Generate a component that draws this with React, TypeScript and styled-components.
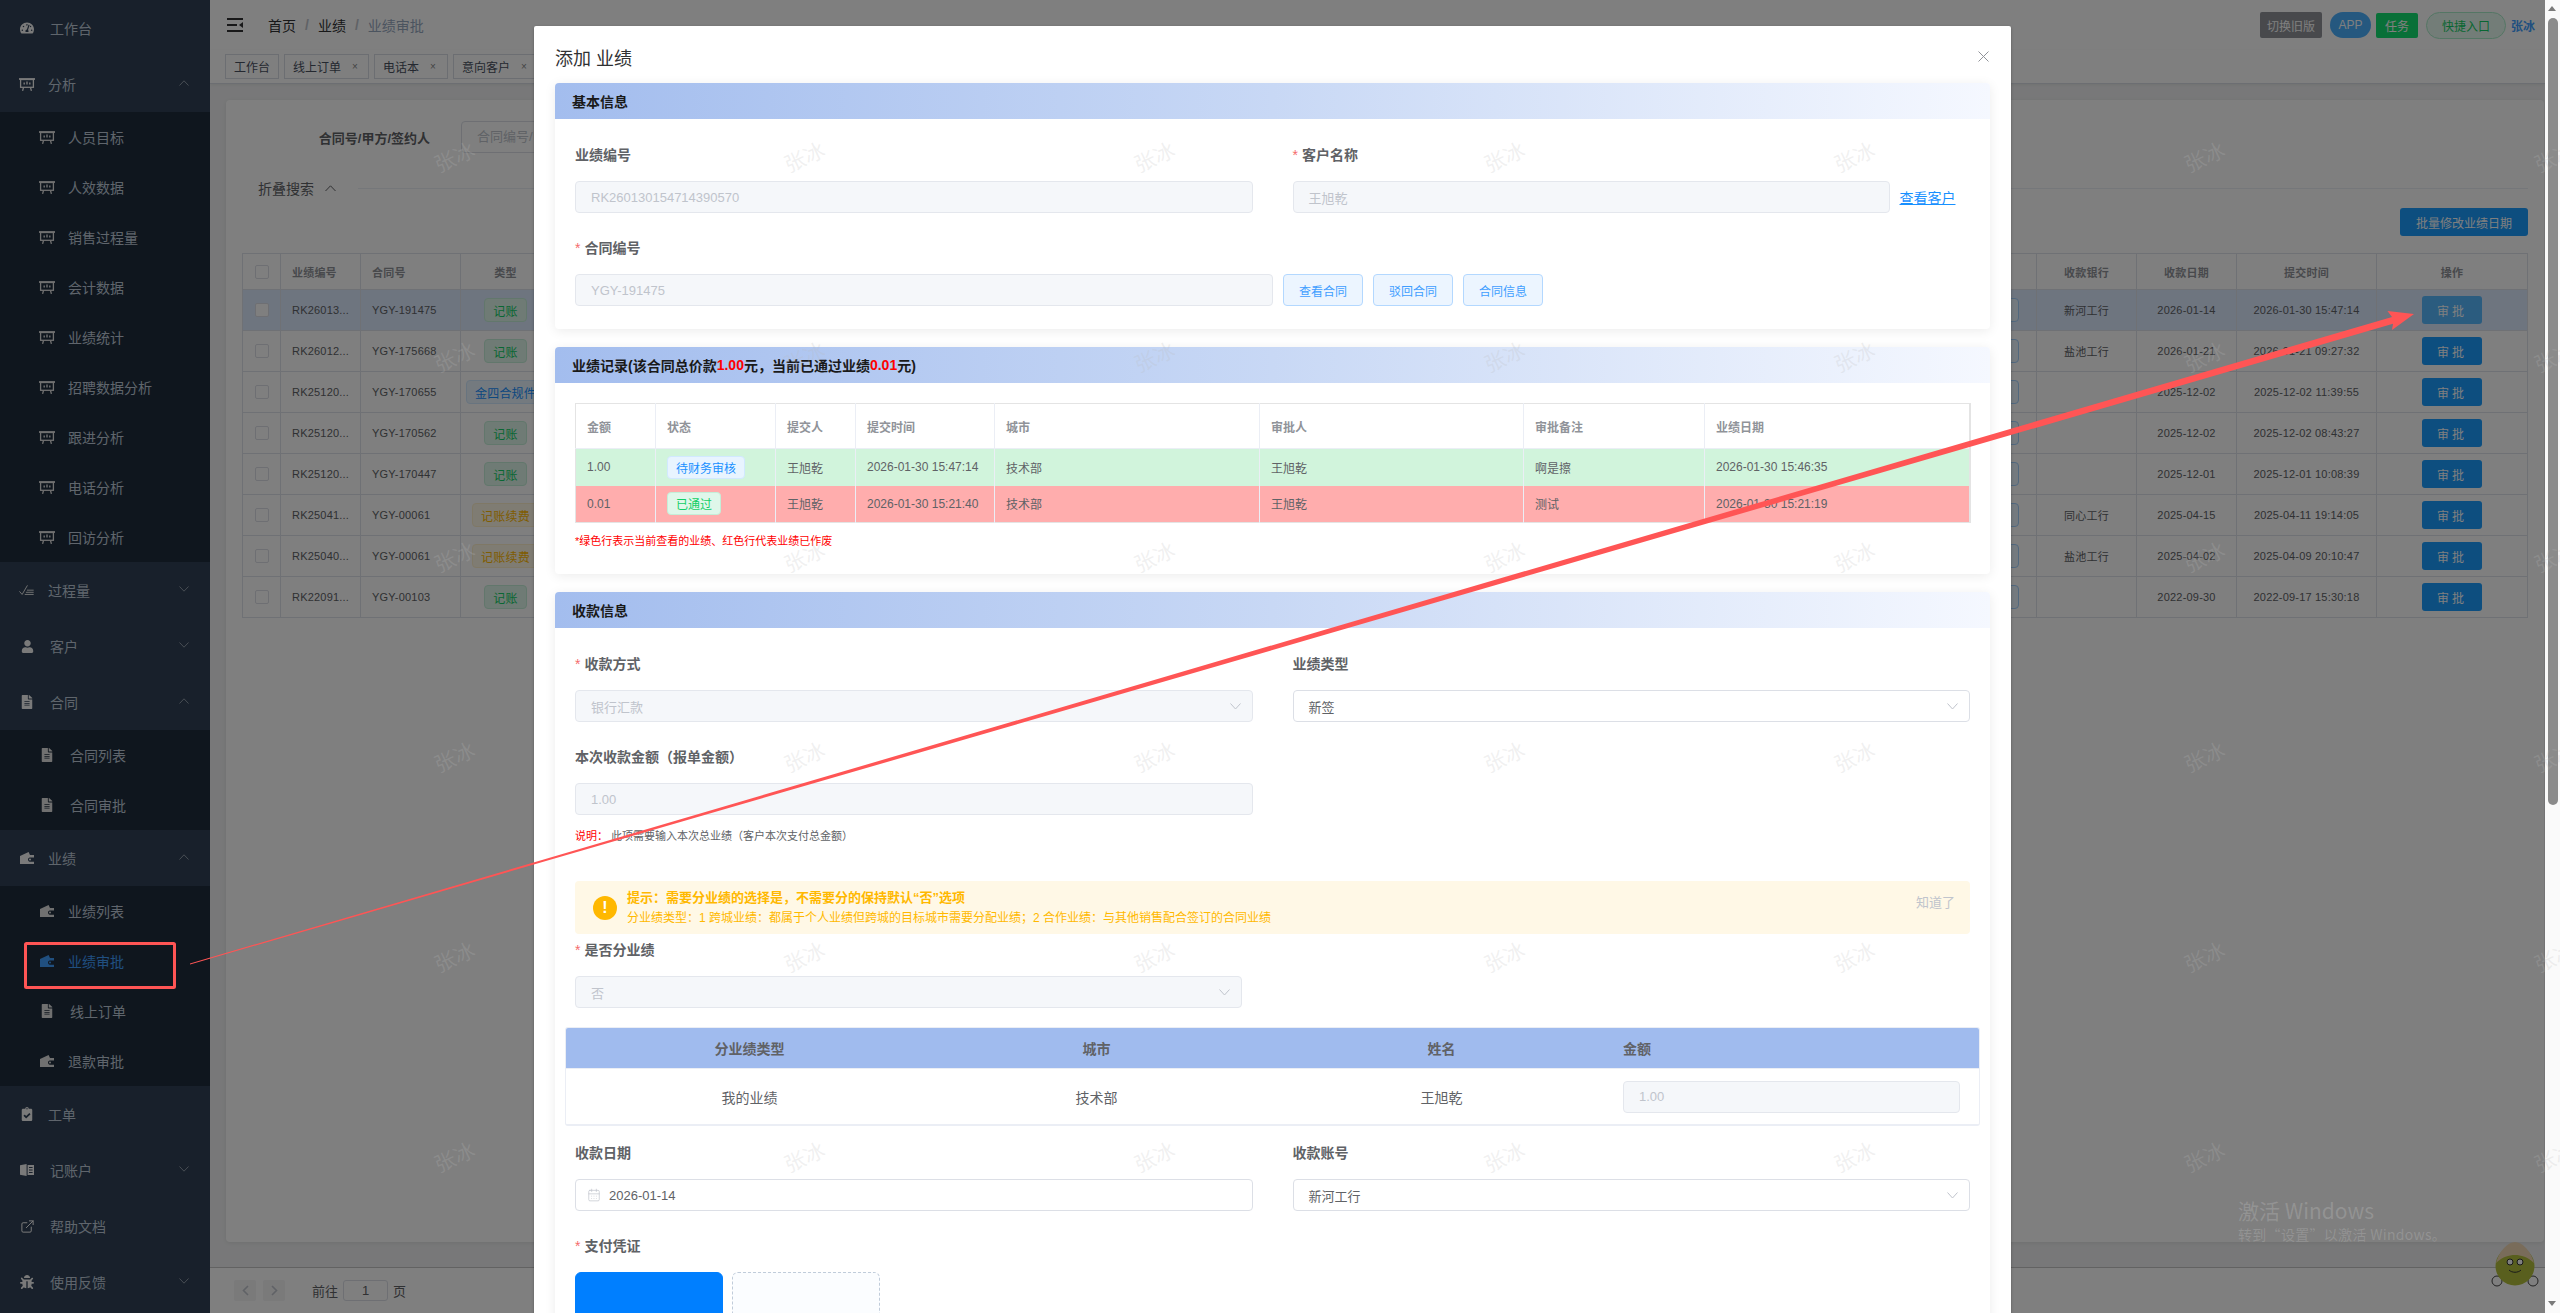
import React from "react";
import styled, { createGlobalStyle, css } from "styled-components";
import { FaTachometerAlt, FaUser, FaFileAlt, FaClipboardCheck, FaBug } from "react-icons/fa";
import { ExternalLink, CalendarDays } from "lucide-react";

const Global = createGlobalStyle`
  html, body { margin: 0; height: 100%; overflow: hidden; }
  #root { height: 1313px; overflow: hidden; }
  body { font-family: "Liberation Sans", "Noto Sans CJK SC", sans-serif; font-size: 14px; color: #606266; background: #fff; }
  * { box-sizing: border-box; }
`;

/* ---------- page shell ---------- */
const Shell = styled.div`
  display: flex;
  width: 2560px;
  height: 1313px;
  padding-right: 15px;
  position: relative;
  overflow: hidden;
`;
const Sidebar = styled.aside`
  flex: 0 0 210px;
  background: #304156;
  display: flex;
  flex-direction: column;
`;
const MenuRow = styled.div<{ $sub?: boolean; $active?: boolean }>`
  display: flex;
  align-items: center;
  flex: none;
  height: ${(p) => (p.$sub ? 50 : 56)}px;
  padding-left: ${(p) => (p.$sub ? 39 : 19)}px;
  background: ${(p) => (p.$sub ? "#1f2d3d" : "#304156")};
  color: ${(p) => (p.$active ? "#409eff" : "#bfcbd9")};
  position: relative;
`;
const MenuIcon = styled.span<{ $sub?: boolean; $active?: boolean }>`
  width: 16px;
  height: 16px;
  display: flex;
  align-items: center;
  justify-content: center;
  flex: none;
  color: ${(p) => (p.$active ? "#409eff" : p.$sub ? "#e0e0e0" : "#f4f4f4")};
`;
const MenuText = styled.span<{ $wide?: boolean }>`
  margin-left: ${(p) => (p.$wide ? 15 : 13)}px;
  white-space: nowrap;
`;
const MenuChevron = styled.svg`
  margin-left: auto;
  margin-right: 21px;
  width: 10px;
  height: 6px;
  margin-top: -3px;
  color: #909ba8;
`;

const Main = styled.main`
  flex: 1;
  min-width: 0;
  display: flex;
  flex-direction: column;
  background: #f0f1f2;
`;
const Navbar = styled.header`
  flex: 0 0 50px;
  display: flex;
  align-items: center;
  background: #fff;
  padding: 0 10px 0 17px;
  box-shadow: 0 1px 4px rgba(0, 21, 41, 0.08);
`;
const Crumbs = styled.nav`
  margin-left: 25px;
  display: flex;
  align-items: center;
`;
const Crumb = styled.span<{ $last?: boolean }>`
  color: ${(p) => (p.$last ? "#97a8be" : "#303133")};
`;
const CrumbSep = styled.span`
  color: #c0c4cc;
  margin: 0 9px;
  font-weight: 700;
`;
const NavTools = styled.div`
  margin-left: auto;
  display: flex;
  align-items: center;
`;
const NavBtn = styled.span<{ $w: number; $bg: string; $ml: number; $round?: boolean; $color?: string; $border?: string; $h?: number }>`
  display: flex;
  align-items: center;
  justify-content: center;
  width: ${(p) => p.$w}px;
  height: ${(p) => p.$h ?? 26}px;
  margin-left: ${(p) => p.$ml}px;
  background: ${(p) => p.$bg};
  color: ${(p) => p.$color ?? "#fff"};
  border-radius: ${(p) => (p.$round ? "14px" : "2px")};
  font-size: 12px;
  ${(p) => p.$border && css`border: 1px solid ${p.$border};`}
`;
const NavUser = styled.span`
  margin-left: 5px;
  color: #409eff;
  font-size: 12px;
  font-weight: 700;
  width: 24px;
`;
const TagBar = styled.div`
  flex: 0 0 34px;
  display: flex;
  align-items: flex-start;
  gap: 5px;
  padding: 4px 0 0 15px;
  background: #fff;
  border-bottom: 1px solid #d8dce5;
  box-shadow: 0 1px 3px rgba(0, 0, 0, 0.06);
`;
const ViewTag = styled.span<{ $w: number }>`
  display: flex;
  align-items: center;
  height: 25px;
  width: ${(p) => p.$w}px;
  padding-left: 8px;
  font-size: 12px;
  color: #495060;
  background: #fff;
  border: 1px solid #d8dce5;
  gap: 8px;
`;
const TagClose = styled.span`
  font-size: 10px;
  color: #888;
  margin-left: 3px;
`;
const Content = styled.div`
  flex: 1;
  min-height: 0;
  padding: 16px 1px 25px 16px;
  display: flex;
`;
const PanelCard = styled.section`
  flex: 1;
  background: #fff;
  border-radius: 4px;
  padding: 21px 16px 0;
  box-shadow: 0 1px 4px rgba(0, 0, 0, 0.08);
  min-width: 0;
`;
const FilterRow = styled.div`
  display: flex;
  align-items: center;
`;
const FilterLabel = styled.label`
  width: 188px;
  text-align: right;
  font-size: 13px;
  font-weight: 700;
  color: #606266;
`;
const FilterInput = styled.div`
  margin-left: 31px;
  width: 220px;
  height: 32px;
  border: 1px solid #dcdfe6;
  border-radius: 4px;
  padding-left: 15px;
  font-size: 13px;
  line-height: 30px;
  color: #c0c4cc;
`;
const Collapse = styled.div`
  display: flex;
  align-items: center;
  margin-top: 25px;
  height: 20px;
  padding-left: 16px;
  color: #606266;
`;
const CollapseChevron = styled.svg`
  margin-left: 11px;
  width: 11px;
  height: 7px;
  color: #606266;
`;
const CollapseLine = styled.span`
  flex: 1;
  margin-left: 22px;
  border-top: 1px solid #ebeef5;
`;
const Actions = styled.div`
  display: flex;
  justify-content: flex-end;
  margin: 10px 0 17px;
`;
const PrimaryBtn = styled.span`
  display: flex;
  align-items: center;
  justify-content: center;
  height: 28px;
  padding: 0 16px;
  background: #1a9cff;
  color: #fff;
  border-radius: 3px;
  font-size: 12px;
`;
const BgTable = styled.div`
  border-top: 1px solid #dfe3ea;
  border-left: 1px solid #dfe3ea;
  font-size: 11px;
  color: #606266;
`;
const BgRow = styled.div<{ $head?: boolean; $selected?: boolean }>`
  display: grid;
  grid-template-columns: 38px 80px 100px 90px 1fr 100px 100px 100px 140px 151px;
  height: ${(p) => (p.$head ? 36 : 41)}px;
  font-weight: ${(p) => (p.$head ? 700 : 400)};
  color: ${(p) => (p.$head ? "#909399" : "#606266")};
  background: ${(p) => (p.$selected ? "#dceaff" : "#fff")};
`;
const BgCell = styled.div<{ $center?: boolean; $voucher?: boolean }>`
  display: flex;
  align-items: center;
  justify-content: ${(p) => (p.$voucher ? "flex-end" : p.$center ? "center" : "flex-start")};
  padding: ${(p) => (p.$voucher ? "0 17px 0 0" : p.$center ? "0" : "0 11px")};
  border-right: 1px solid #dfe3ea;
  border-bottom: 1px solid #dfe3ea;
  white-space: nowrap;
  overflow: hidden;
  letter-spacing: 0.2px;
`;
const CheckBox = styled.span`
  width: 14px;
  height: 14px;
  border: 1px solid #dcdfe6;
  border-radius: 2px;
  background: #fff;
`;
const toneMap = {
  green: { bg: "#dff7ea", bd: "#c4efd8", fg: "#13ce66" },
  blue: { bg: "#e8f4ff", bd: "#d1e9ff", fg: "#1890ff" },
  orange: { bg: "#fff8e6", bd: "#fff1cc", fg: "#ffba00" },
};
const StatusTag = styled.span<{ $tone: keyof typeof toneMap; $h?: number }>`
  display: inline-flex;
  align-items: center;
  height: ${(p) => p.$h ?? 24}px;
  padding: 0 8px;
  font-size: 12px;
  border-radius: 4px;
  background: ${(p) => toneMap[p.$tone].bg};
  border: 1px solid ${(p) => toneMap[p.$tone].bd};
  color: ${(p) => toneMap[p.$tone].fg};
`;
const MiniBtn = styled.span`
  width: 60px;
  height: 24px;
  background: #e8f4ff;
  border: 1px solid #a3d0fd;
  border-radius: 4px;
`;
const ApproveBtn = styled.span<{ $hover?: boolean }>`
  display: flex;
  align-items: center;
  justify-content: center;
  width: 60px;
  height: 28px;
  background: ${(p) => (p.$hover ? "#56b8ff" : "#1a9cff")};
  color: #fff;
  border-radius: 3px;
  font-size: 12px;
  letter-spacing: 3px;
`;
const Pager = styled.footer`
  flex: 0 0 46px;
  display: flex;
  align-items: center;
  background: #fff;
  border-top: 1px solid #c4c4c4;
  padding-left: 24px;
  font-size: 13px;
  color: #606266;
`;
const PageBtn = styled.span`
  width: 22px;
  height: 21px;
  margin-right: 7px;
  border-radius: 2px;
  background: #f4f4f5;
  color: #c0c4cc;
  display: flex;
  align-items: center;
  justify-content: center;
`;
const PageInput = styled.span`
  width: 45px;
  height: 21px;
  margin: 0 5px 0 5px;
  border: 1px solid #dcdfe6;
  border-radius: 3px;
  text-align: center;
  line-height: 19px;
  background: #fff;
`;
const PageJump = styled.span`
  margin-left: 20px;
  display: flex;
  align-items: center;
`;
const Mascot = styled.svg`
  position: absolute;
  left: 2490px;
  top: 1242px;
  width: 50px;
  height: 45px;
`;

/* ---------- overlays ---------- */
const Mask = styled.div`
  position: absolute;
  inset: 0;
  background: rgba(0, 0, 0, 0.5);
`;
const ModalLayer = styled.div`
  position: absolute;
  inset: 0 15px 0 0;
  display: flex;
  justify-content: center;
  align-items: flex-start;
  padding-top: 26px;
  overflow: hidden;
`;
const Dialog = styled.div`
  width: 1477px;
  flex: none;
  background: #fff;
  border-radius: 2px;
  padding: 21px 21px 0;
  box-shadow: 0 1px 3px rgba(0, 0, 0, 0.3);
  position: relative;
`;
const DialogTitle = styled.h2`
  margin: 0 0 12px;
  font-size: 18px;
  line-height: 24px;
  font-weight: 400;
  color: #303133;
`;
const DialogClose = styled.svg`
  position: absolute;
  top: 25px;
  right: 22px;
  width: 11px;
  height: 11px;
  color: #909399;
`;
const Card = styled.section`
  background: #fff;
  border-radius: 4px;
  box-shadow: 0 2px 12px rgba(0, 0, 0, 0.08);
  margin-bottom: 18px;
  overflow: hidden;
`;
const CardHead = styled.div`
  height: 36px;
  padding-left: 17px;
  display: flex;
  align-items: center;
  font-weight: 700;
  font-size: 14px;
  color: #1a1a1a;
  background: linear-gradient(90deg, #a3bdee 0%, #c8d8f5 50%, #f5f8ff 100%);
`;
const RedNum = styled.span`
  color: #f00;
`;
const CardBody = styled.div<{ $pt?: number; $pb: number }>`
  padding: ${(p) => p.$pt ?? 26}px 20px ${(p) => p.$pb}px;
`;
const TwoCol = styled.div`
  display: grid;
  grid-template-columns: 1fr 1fr;
  column-gap: 40px;
`;
const Field = styled.div<{ $top?: number }>`
  margin-top: ${(p) => p.$top ?? 0}px;
`;
const Label = styled.div`
  height: 20px;
  line-height: 20px;
  margin-bottom: 16px;
  font-weight: 700;
  color: #606266;
`;
const Star = styled.span`
  color: #f56c6c;
  font-weight: 400;
  margin-right: 4px;
`;
const Control = styled.div<{ $off?: boolean; $w?: number }>`
  height: 32px;
  width: ${(p) => (p.$w ? `${p.$w}px` : "100%")};
  flex: none;
  display: flex;
  align-items: center;
  padding: 0 11px 0 15px;
  font-size: 13px;
  border-radius: 4px;
  border: 1px solid ${(p) => (p.$off ? "#e4e7ed" : "#dcdfe6")};
  background: ${(p) => (p.$off ? "#f5f7fa" : "#fff")};
  color: ${(p) => (p.$off ? "#c0c4cc" : "#606266")};
`;
const Chevron = styled.svg`
  margin-left: auto;
  width: 11px;
  height: 7px;
  color: #c0c4cc;
`;
const InlineRow = styled.div<{ $gap: number }>`
  display: flex;
  align-items: center;
  gap: ${(p) => p.$gap}px;
`;
const Link = styled.a`
  color: #1890ff;
  text-decoration: underline;
`;
const PlainBtn = styled.span`
  width: 80px;
  height: 32px;
  display: flex;
  align-items: center;
  justify-content: center;
  font-size: 12px;
  background: #ecf5ff;
  border: 1px solid #b3d8ff;
  border-radius: 4px;
  color: #409eff;
`;
const RecordTable = styled.table`
  width: 1394px;
  table-layout: fixed;
  border-collapse: collapse;
  font-size: 12px;
  border: 1px solid #e4e4e4;
  border-right-width: 2px;
`;
const RecordRow = styled.tr<{ $bg: string }>`
  background: ${(p) => p.$bg};
  height: 37px;
`;
const RecordHeadRow = styled.tr`
  height: 45px;
`;
const RecordTh = styled.th`
  text-align: left;
  padding: 0 11px;
  font-weight: 700;
  color: #909399;
  border-right: 1px solid #ebeef5;
  border-bottom: 1px solid #ebeef5;
`;
const RecordTd = styled.td`
  padding: 0 11px;
  color: #606266;
  border-right: 1px solid #ebeef5;
`;
const Note = styled.div`
  margin-top: 9px;
  font-size: 11px;
  line-height: 18px;
  color: #f00;
`;
const Hint = styled.div`
  margin-top: 12px;
  font-size: 11px;
  line-height: 18px;
  color: #606266;
`;
const HintKey = styled.span`
  color: #f00;
  margin-right: 3px;
`;
const Alert = styled.div`
  position: relative;
  margin-top: 36px;
  height: 53px;
  display: flex;
  align-items: center;
  padding-left: 18px;
  gap: 10px;
  background: #fff8e6;
  border-radius: 4px;
`;
const AlertDot = styled.span`
  width: 24px;
  height: 24px;
  border-radius: 50%;
  background: #ffb800;
  color: #fff;
  font-size: 16px;
  font-weight: 700;
  display: flex;
  align-items: center;
  justify-content: center;
  flex: none;
`;
const AlertTitle = styled.div`
  font-size: 13px;
  font-weight: 700;
  line-height: 20px;
  color: #ffb800;
`;
const AlertDesc = styled.div`
  font-size: 12px;
  line-height: 20px;
  color: #ffb800;
`;
const AlertClose = styled.span`
  position: absolute;
  right: 15px;
  top: 11px;
  font-size: 13px;
  color: #c0c4cc;
`;
const SplitTable = styled.div`
  margin: 19px -10px 0;
  border: 1px solid #ebeef5;
  border-bottom-width: 2px;
  border-radius: 3px;
  overflow: hidden;
`;
const SplitRow = styled.div<{ $head?: boolean }>`
  display: grid;
  grid-template-columns: 367px 327px 363px 1fr;
  align-items: center;
  height: ${(p) => (p.$head ? 41 : 55)}px;
  background: ${(p) => (p.$head ? "#a0bbee" : "#fff")};
  font-weight: ${(p) => (p.$head ? 700 : 400)};
  color: #606266;
  border-bottom: ${(p) => (p.$head ? "1px solid #ebeef5" : "none")};
`;
const SplitCell = styled.div<{ $left?: boolean }>`
  text-align: ${(p) => (p.$left ? "left" : "center")};
  padding-right: ${(p) => (p.$left ? 19 : 0)}px;
`;
const DateIcon = styled.span`
  color: #c0c4cc;
  display: flex;
  margin: 0 8px 0 -4px;
`;
const Uploads = styled.div`
  display: flex;
  gap: 9px;
`;
const UploadBox = styled.div<{ $filled?: boolean }>`
  width: 148px;
  height: 148px;
  border-radius: 6px;
  background: ${(p) => (p.$filled ? "#007fff" : "#fbfdff")};
  border: 1px ${(p) => (p.$filled ? "solid #007fff" : "dashed #c0ccda")};
`;
const Scrollbar = styled.div`
  position: absolute;
  top: 0;
  right: 0;
  bottom: 0;
  width: 15px;
  background: #fafafa;
`;
const ScrollThumb = styled.div`
  position: absolute;
  left: 3px;
  right: 2px;
  top: 18px;
  height: 787px;
  background: #8b8b8b;
  border-radius: 5px;
`;
const ScrollArrow = styled.span<{ $down?: boolean }>`
  position: absolute;
  left: 3px;
  width: 0;
  height: 0;
  border-left: 4.5px solid transparent;
  border-right: 4.5px solid transparent;
  ${(p) =>
    p.$down
      ? css`bottom: 7px; border-top: 5px solid #7a7a7a;`
      : css`top: 6px; border-bottom: 5px solid #7a7a7a;`}
`;
const WinMark = styled.div`
  position: absolute;
  left: 2238px;
  top: 1196px;
  height: 46px;
  width: 220px;
  overflow: hidden;
  color: rgba(255, 255, 255, 0.16);
  font-family: "Noto Sans CJK SC", sans-serif;
`;
const WinTitle = styled.div`
  font-size: 21px;
  line-height: 28px;
  white-space: nowrap;
`;
const WinSub = styled.div`
  font-size: 14px;
  line-height: 20px;
  letter-spacing: 0.3px;
  white-space: nowrap;
`;
const Watermarks = styled.div`
  position: absolute;
  left: 279px;
  top: 56px;
  display: grid;
  grid-template-columns: repeat(7, 350px);
  grid-auto-rows: 200px;
  place-items: center;
  pointer-events: none;
`;
const WaterText = styled.span`
  font-size: 21px;
  color: rgba(187, 187, 187, 0.22);
  transform: rotate(-25deg);
  font-family: "Noto Sans CJK SC", sans-serif;
`;
const Annotation = styled.svg`
  position: absolute;
  left: 0;
  top: 0;
  width: 2560px;
  height: 1313px;
  pointer-events: none;
`;

/* ---------- drawn icons ---------- */
const Board = () => (
  <svg width="16" height="13" viewBox="0 0 16 13" fill="none" stroke="currentColor">
    <path d="M0 1h16" strokeWidth="1.8" />
    <rect x="1.6" y="1.5" width="12.8" height="7.8" strokeWidth="1.3" />
    <path d="M4.5 9.5 3.6 12.8M11.5 9.5l.9 3.3" strokeWidth="1.3" />
    <path d="M5.2 4.5v2M8 3.6v3M10.8 4.5v2" strokeWidth="1.4" />
  </svg>
);
const Checklist = () => (
  <svg width="18" height="12" viewBox="0 0 18 12" fill="none" stroke="currentColor" strokeWidth="1">
    <path d="M0.5 7.5 3.5 11 9.5 0.8" />
    <path d="M9 6.2h7.5M7.8 8.6h8.7M6.5 11h10" />
  </svg>
);
const Wallet = () => (
  <svg width="14" height="12" viewBox="0 0 14 12" fill="currentColor">
    <path d="M0 4 8.6 0 10 3h4v2.4H9.6a2.3 2.3 0 0 0 0 4.4H14V12H0z" />
    <circle cx="10" cy="7.6" r="1" />
  </svg>
);
const Ledger = () => (
  <svg width="14" height="12" viewBox="0 0 14 12" fill="currentColor">
    <path d="M0 1.2 6.6 0v12L0 10.8z" />
    <path d="M7.6 1H14v10H7.6zM9 3v1h3.6V3zm0 2.5v1h3.6v-1zM9 8v1h3.6V8z" fillRule="evenodd" />
  </svg>
);
const Hamburger = () => (
  <svg width="16" height="14" viewBox="0 0 16 14" fill="none" stroke="#303133" strokeWidth="1.8">
    <path d="M0 1h16M0 7h10M0 13h16" />
    <path d="M16 4v6l-4-3z" fill="#303133" stroke="none" />
  </svg>
);
const Down = () => (
  <Chevron viewBox="0 0 11 7" fill="none" stroke="currentColor">
    <path d="M.5.5l5 5.5 5-5.5" />
  </Chevron>
);

type MenuItem = {
  label: string;
  icon: React.ReactNode;
  sub?: boolean;
  wide?: boolean;
  active?: boolean;
  chevron?: "up" | "down";
};
const menu: MenuItem[] = [
  { label: "工作台", icon: <FaTachometerAlt size={14} />, wide: true },
  { label: "分析", icon: <Board />, chevron: "up" },
  ...["人员目标", "人效数据", "销售过程量", "会计数据", "业绩统计", "招聘数据分析", "跟进分析", "电话分析", "回访分析"].map(
    (label) => ({ label, icon: <Board />, sub: true })
  ),
  { label: "过程量", icon: <Checklist />, chevron: "down" },
  { label: "客户", icon: <FaUser size={13} />, wide: true, chevron: "down" },
  { label: "合同", icon: <FaFileAlt size={14} />, wide: true, chevron: "up" },
  { label: "合同列表", icon: <FaFileAlt size={14} />, sub: true, wide: true },
  { label: "合同审批", icon: <FaFileAlt size={14} />, sub: true, wide: true },
  { label: "业绩", icon: <Wallet />, chevron: "up" },
  { label: "业绩列表", icon: <Wallet />, sub: true },
  { label: "业绩审批", icon: <Wallet />, sub: true, active: true },
  { label: "线上订单", icon: <FaFileAlt size={14} />, sub: true, wide: true },
  { label: "退款审批", icon: <Wallet />, sub: true },
  { label: "工单", icon: <FaClipboardCheck size={14} /> },
  { label: "记账户", icon: <Ledger />, wide: true, chevron: "down" },
  { label: "帮助文档", icon: <ExternalLink size={15} strokeWidth={1.6} />, wide: true },
  { label: "使用反馈", icon: <FaBug size={14} />, wide: true, chevron: "down" },
];

const rows: { id: string; no: string; type: string; tone: keyof typeof toneMap; bank: string; day: string; at: string }[] = [
  { id: "RK26013...", no: "YGY-191475", type: "记账", tone: "green", bank: "新河工行", day: "2026-01-14", at: "2026-01-30 15:47:14" },
  { id: "RK26012...", no: "YGY-175668", type: "记账", tone: "green", bank: "盐池工行", day: "2026-01-21", at: "2026-01-21 09:27:32" },
  { id: "RK25120...", no: "YGY-170655", type: "金四合规件", tone: "blue", bank: "", day: "2025-12-02", at: "2025-12-02 11:39:55" },
  { id: "RK25120...", no: "YGY-170562", type: "记账", tone: "green", bank: "", day: "2025-12-02", at: "2025-12-02 08:43:27" },
  { id: "RK25120...", no: "YGY-170447", type: "记账", tone: "green", bank: "", day: "2025-12-01", at: "2025-12-01 10:08:39" },
  { id: "RK25041...", no: "YGY-00061", type: "记账续费", tone: "orange", bank: "同心工行", day: "2025-04-15", at: "2025-04-11 19:14:05" },
  { id: "RK25040...", no: "YGY-00061", type: "记账续费", tone: "orange", bank: "盐池工行", day: "2025-04-02", at: "2025-04-09 20:10:47" },
  { id: "RK22091...", no: "YGY-00103", type: "记账", tone: "green", bank: "", day: "2022-09-30", at: "2022-09-17 15:30:18" },
];

const records = [
  { bg: "#d1f4dc", amount: "1.00", status: "待财务审核", tone: "blue" as const, at: "2026-01-30 15:47:14", note: "啊是擦", date: "2026-01-30 15:46:35" },
  { bg: "#ffadad", amount: "0.01", status: "已通过", tone: "green" as const, at: "2026-01-30 15:21:40", note: "测试", date: "2026-01-30 15:21:19" },
];

const waterCells = Array.from({ length: 42 });

export default function App() {
  return (
    <>
      <Global />
      <Shell>
        <Sidebar>
          {menu.map((m) => (
            <MenuRow key={m.label} $sub={m.sub} $active={m.active}>
              <MenuIcon $sub={m.sub} $active={m.active}>{m.icon}</MenuIcon>
              <MenuText $wide={m.wide}>{m.label}</MenuText>
              {m.chevron && (
                <MenuChevron viewBox="0 0 10 6" fill="none" stroke="currentColor">
                  <path d={m.chevron === "up" ? "M.5 5.5 5 .8l4.5 4.7" : "M.5.5 5 5.2 9.5.5"} />
                </MenuChevron>
              )}
            </MenuRow>
          ))}
        </Sidebar>
        <Main>
          <Navbar>
            <Hamburger />
            <Crumbs>
              <Crumb>首页</Crumb>
              <CrumbSep>/</CrumbSep>
              <Crumb>业绩</Crumb>
              <CrumbSep>/</CrumbSep>
              <Crumb $last>业绩审批</Crumb>
            </Crumbs>
            <NavTools>
              <NavBtn $w={62} $bg="#909399" $ml={0}>切换旧版</NavBtn>
              <NavBtn $w={41} $bg="#4ab0ff" $ml={8} $round>APP</NavBtn>
              <NavBtn $w={42} $bg="#13e070" $ml={5} $h={25}>任务</NavBtn>
              <NavBtn $w={80} $bg="#e7faf0" $ml={8} $round $color="#13ce66" $border="#a8ecc8" $h={27}>快捷入口</NavBtn>
              <NavUser>张冰</NavUser>
            </NavTools>
          </Navbar>
          <TagBar>
            <ViewTag $w={54}>工作台</ViewTag>
            <ViewTag $w={85}>线上订单<TagClose>×</TagClose></ViewTag>
            <ViewTag $w={74}>电话本<TagClose>×</TagClose></ViewTag>
            <ViewTag $w={85}>意向客户<TagClose>×</TagClose></ViewTag>
          </TagBar>
          <Content>
            <PanelCard>
              <FilterRow>
                <FilterLabel>合同号/甲方/签约人</FilterLabel>
                <FilterInput>合同编号/甲方/签约人</FilterInput>
              </FilterRow>
              <Collapse>
                折叠搜索
                <CollapseChevron viewBox="0 0 11 7" fill="none" stroke="currentColor">
                  <path d="M.5 6 5.5.8l5 5.2" />
                </CollapseChevron>
                <CollapseLine />
              </Collapse>
              <Actions>
                <PrimaryBtn>批量修改业绩日期</PrimaryBtn>
              </Actions>
              <BgTable>
                <BgRow $head>
                  <BgCell $center><CheckBox /></BgCell>
                  <BgCell>业绩编号</BgCell>
                  <BgCell>合同号</BgCell>
                  <BgCell $center>类型</BgCell>
                  <BgCell />
                  <BgCell />
                  <BgCell $center>收款银行</BgCell>
                  <BgCell $center>收款日期</BgCell>
                  <BgCell $center>提交时间</BgCell>
                  <BgCell $center>操作</BgCell>
                </BgRow>
                {rows.map((r, i) => (
                  <BgRow key={i} $selected={i === 0}>
                    <BgCell $center><CheckBox /></BgCell>
                    <BgCell>{r.id}</BgCell>
                    <BgCell>{r.no}</BgCell>
                    <BgCell $center><StatusTag $tone={r.tone}>{r.type}</StatusTag></BgCell>
                    <BgCell />
                    <BgCell $voucher><MiniBtn /></BgCell>
                    <BgCell $center>{r.bank}</BgCell>
                    <BgCell $center>{r.day}</BgCell>
                    <BgCell $center>{r.at}</BgCell>
                    <BgCell $center><ApproveBtn $hover={i === 0}>审批</ApproveBtn></BgCell>
                  </BgRow>
                ))}
              </BgTable>
            </PanelCard>
          </Content>
          <Pager>
            <PageBtn>
              <svg width="7" height="11" viewBox="0 0 7 11" fill="none" stroke="currentColor" strokeWidth="1.6"><path d="M6 1 1.5 5.5 6 10" /></svg>
            </PageBtn>
            <PageBtn>
              <svg width="7" height="11" viewBox="0 0 7 11" fill="none" stroke="currentColor" strokeWidth="1.6"><path d="M1 1l4.5 4.5L1 10" /></svg>
            </PageBtn>
            <PageJump>前往<PageInput>1</PageInput>页</PageJump>
          </Pager>
        </Main>
        <Mascot viewBox="0 0 50 45">
          <ellipse cx="7" cy="39" rx="5" ry="5" fill="#fff" stroke="#444" />
          <ellipse cx="43" cy="39" rx="5" ry="5" fill="#fff" stroke="#444" />
          <ellipse cx="25" cy="24" rx="19.5" ry="19.5" fill="#b2bf3c" />
          <path d="M6 21C9 9 18 0 25 0s16 9 19 21c-6-6-13-8-19-8s-13 2-19 8z" fill="#f2d9b4" />
          <circle cx="20" cy="20" r="3" fill="#fff" stroke="#333" />
          <circle cx="30" cy="20" r="3" fill="#fff" stroke="#333" />
          <path d="M19 28c3 3 9 3 12 0" fill="none" stroke="#333" />
        </Mascot>
        <Mask />
        <WinMark>
          <WinTitle>激活 Windows</WinTitle>
          <WinSub>转到“设置”以激活 Windows。</WinSub>
        </WinMark>
        <ModalLayer>
          <Dialog>
            <DialogTitle>添加 业绩</DialogTitle>
            <DialogClose viewBox="0 0 11 11" fill="none" stroke="currentColor">
              <path d="M.5.5l10 10M10.5.5l-10 10" />
            </DialogClose>
            <Card>
              <CardHead>基本信息</CardHead>
              <CardBody $pb={23}>
                <TwoCol>
                  <Field>
                    <Label>业绩编号</Label>
                    <Control $off>RK260130154714390570</Control>
                  </Field>
                  <Field>
                    <Label><Star>*</Star>客户名称</Label>
                    <InlineRow $gap={10}>
                      <Control $off $w={597}>王旭乾</Control>
                      <Link>查看客户</Link>
                    </InlineRow>
                  </Field>
                </TwoCol>
                <Field $top={25}>
                  <Label><Star>*</Star>合同编号</Label>
                  <InlineRow $gap={10}>
                    <Control $off $w={698}>YGY-191475</Control>
                    <PlainBtn>查看合同</PlainBtn>
                    <PlainBtn>驳回合同</PlainBtn>
                    <PlainBtn>合同信息</PlainBtn>
                  </InlineRow>
                </Field>
              </CardBody>
            </Card>
            <Card>
              <CardHead>
                业绩记录(该合同总价款<RedNum>1.00</RedNum>元，当前已通过业绩<RedNum>0.01</RedNum>元)
              </CardHead>
              <CardBody $pt={20} $pb={24}>
                <RecordTable>
                  <colgroup>
                    <col width="80" /><col width="120" /><col width="80" /><col width="139" />
                    <col width="265" /><col width="264" /><col width="181" /><col width="265" />
                  </colgroup>
                  <thead>
                    <RecordHeadRow>
                      {["金额", "状态", "提交人", "提交时间", "城市", "审批人", "审批备注", "业绩日期"].map((h) => (
                        <RecordTh key={h}>{h}</RecordTh>
                      ))}
                    </RecordHeadRow>
                  </thead>
                  <tbody>
                    {records.map((r) => (
                      <RecordRow key={r.amount} $bg={r.bg}>
                        <RecordTd>{r.amount}</RecordTd>
                        <RecordTd><StatusTag $tone={r.tone} $h={23}>{r.status}</StatusTag></RecordTd>
                        <RecordTd>王旭乾</RecordTd>
                        <RecordTd>{r.at}</RecordTd>
                        <RecordTd>技术部</RecordTd>
                        <RecordTd>王旭乾</RecordTd>
                        <RecordTd>{r.note}</RecordTd>
                        <RecordTd>{r.date}</RecordTd>
                      </RecordRow>
                    ))}
                  </tbody>
                </RecordTable>
                <Note>*绿色行表示当前查看的业绩、红色行代表业绩已作废</Note>
              </CardBody>
            </Card>
            <Card>
              <CardHead>收款信息</CardHead>
              <CardBody $pb={20}>
                <TwoCol>
                  <Field>
                    <Label><Star>*</Star>收款方式</Label>
                    <Control $off>银行汇款<Down /></Control>
                  </Field>
                  <Field>
                    <Label>业绩类型</Label>
                    <Control>新签<Down /></Control>
                  </Field>
                </TwoCol>
                <TwoCol>
                  <Field $top={25}>
                    <Label>本次收款金额（报单金额）</Label>
                    <Control $off>1.00</Control>
                    <Hint><HintKey>说明：</HintKey>此项需要输入本次总业绩（客户本次支付总金额）</Hint>
                  </Field>
                </TwoCol>
                <Alert>
                  <AlertDot>!</AlertDot>
                  <div>
                    <AlertTitle>提示：需要分业绩的选择是，不需要分的保持默认“否”选项</AlertTitle>
                    <AlertDesc>分业绩类型：1 跨城业绩：都属于个人业绩但跨城的目标城市需要分配业绩；2 合作业绩：与其他销售配合签订的合同业绩</AlertDesc>
                  </div>
                  <AlertClose>知道了</AlertClose>
                </Alert>
                <Field $top={6}>
                  <Label><Star>*</Star>是否分业绩</Label>
                  <Control $off $w={667}>否<Down /></Control>
                </Field>
                <SplitTable>
                  <SplitRow $head>
                    <SplitCell>分业绩类型</SplitCell>
                    <SplitCell>城市</SplitCell>
                    <SplitCell>姓名</SplitCell>
                    <SplitCell $left>金额</SplitCell>
                  </SplitRow>
                  <SplitRow>
                    <SplitCell>我的业绩</SplitCell>
                    <SplitCell>技术部</SplitCell>
                    <SplitCell>王旭乾</SplitCell>
                    <SplitCell $left><Control $off>1.00</Control></SplitCell>
                  </SplitRow>
                </SplitTable>
                <TwoCol>
                  <Field $top={17}>
                    <Label>收款日期</Label>
                    <Control>
                      <DateIcon><CalendarDays size={14} strokeWidth={1.2} /></DateIcon>
                      2026-01-14
                    </Control>
                  </Field>
                  <Field $top={17}>
                    <Label>收款账号</Label>
                    <Control>新河工行<Down /></Control>
                  </Field>
                </TwoCol>
                <Field $top={25}>
                  <Label><Star>*</Star>支付凭证</Label>
                  <Uploads>
                    <UploadBox $filled />
                    <UploadBox />
                  </Uploads>
                </Field>
              </CardBody>
            </Card>
          </Dialog>
        </ModalLayer>
        <Scrollbar>
          <ScrollArrow />
          <ScrollThumb />
          <ScrollArrow $down />
        </Scrollbar>
        <Watermarks>
          {waterCells.map((_, i) => (
            <WaterText key={i}>张冰</WaterText>
          ))}
        </Watermarks>
        <Annotation viewBox="0 0 2560 1313">
          <rect x="25.5" y="943.5" width="149" height="44" fill="none" stroke="#ff5555" strokeWidth="3" rx="1" />
          <path
            d="M190 963.5 L1330 628.3 L2392 317 L2387.5 311 L2414 314 L2392 330 L2393 323.8 L1330 633.3 L190 964.5 Z"
            fill="#ff5555"
          />
        </Annotation>
      </Shell>
    </>
  );
}
